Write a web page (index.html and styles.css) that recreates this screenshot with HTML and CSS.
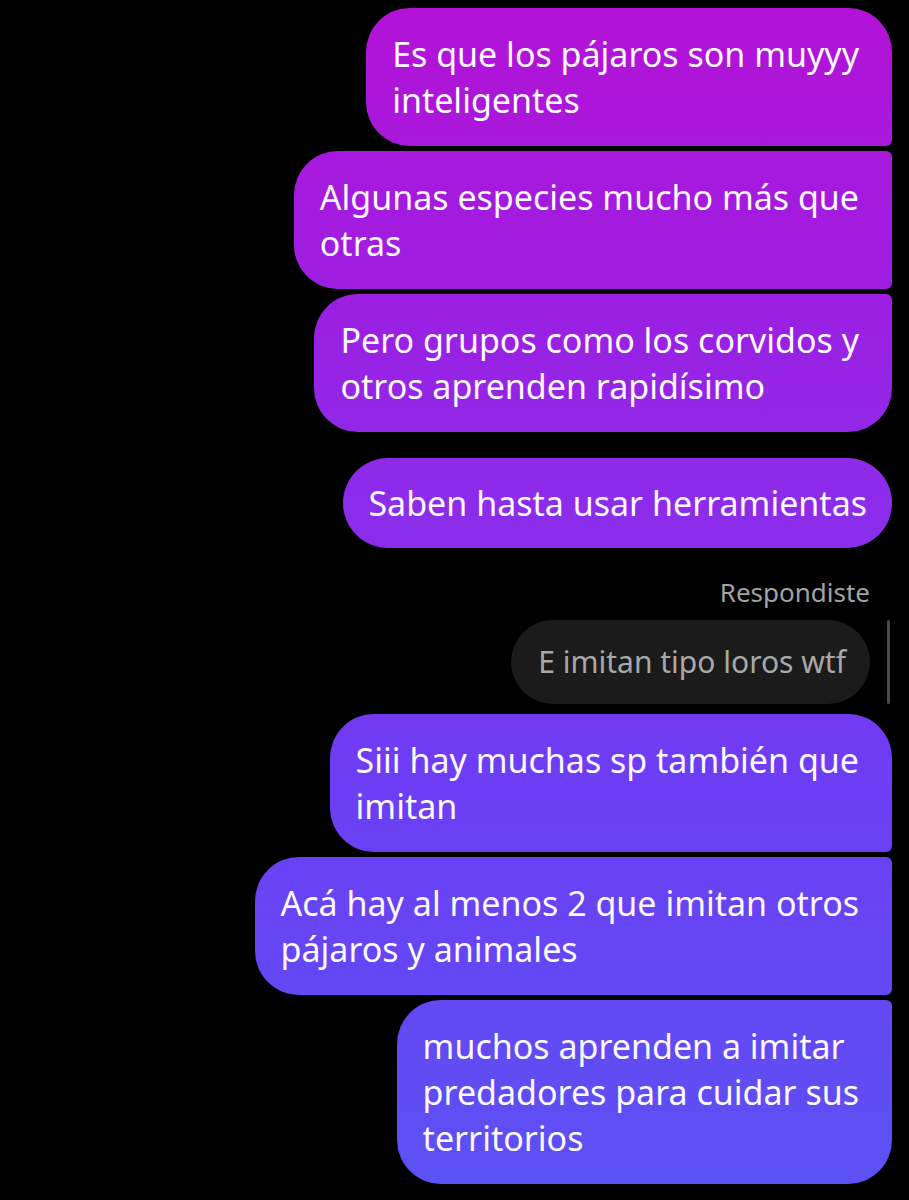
FILE: index.html
```html
<!DOCTYPE html>
<html lang="es">
<head>
    <meta charset="UTF-8">
    <meta name="viewport" content="width=device-width, initial-scale=1.0">
    <title>Chat</title>
    <link rel="stylesheet" href="styles.css">
</head>
<body>
    <div class="chat">
        <div class="group">
            <div class="bubble first">Es que los pájaros son muyyy<br>inteligentes</div>
            <div class="bubble">Algunas especies mucho más que<br>otras</div>
            <div class="bubble last">Pero grupos como los corvidos y<br>otros aprenden rapidísimo</div>
        </div>
        <div class="group">
            <div class="bubble single">Saben hasta usar herramientas</div>
        </div>
        <div class="group reply">
            <div class="reply-label">Respondiste</div>
            <div class="reply-row">
                <div class="quoted">E imitan tipo loros wtf</div>
                <div class="reply-bar"></div>
            </div>
        </div>
        <div class="group tight">
            <div class="bubble first">Siii hay muchas sp también que<br>imitan</div>
            <div class="bubble">Acá hay al menos 2 que imitan otros<br>pájaros y animales</div>
            <div class="bubble last">muchos aprenden a imitar<br>predadores para cuidar sus<br>territorios</div>
        </div>
    </div>
</body>
</html>
```

FILE: styles.css
```css
body {
    margin: 0;
    background-color: #000;
    font-family: "Noto Sans", "Open Sans", sans-serif;
}

.chat {
    display: flex;
    flex-direction: column;
    align-items: flex-end;
    padding: 8px 17px 0 0;
    gap: 26px;
}

.group {
    display: flex;
    flex-direction: column;
    align-items: flex-end;
    gap: 5px;
}

.group.tight {
    margin-top: -16px;
}

.bubble {
    color: #fbf8ff;
    font-size: 34px;
    line-height: 46px;
    padding: 23px 33px 23px 26px;
    border-radius: 44px 6px 6px 44px;
    background: linear-gradient(180deg, #b412d6 0%, #9c1fe2 25%, #8a2eec 45%, #6c3ef5 65%, #5b52f3 100%);
    background-attachment: fixed;
}

.bubble.first {
    border-top-right-radius: 44px;
}

.bubble.last {
    border-bottom-right-radius: 44px;
}

.bubble.single {
    border-radius: 45px;
    padding: 22px 25px;
}

.reply {
    gap: 10px;
}

.reply-label {
    color: #a3a3a3;
    font-size: 26px;
    line-height: 36px;
    padding-right: 22px;
}

.reply-row {
    display: flex;
    align-items: stretch;
    gap: 17px;
}

.quoted {
    background-color: #1b1b1b;
    color: #a8a8a8;
    font-size: 30px;
    line-height: 40px;
    padding: 22px 24px 22px 27px;
    border-radius: 42px;
}

.reply-bar {
    width: 3px;
    margin-right: 2px;
    border-radius: 2px;
    background-color: #4a4a4a;
}
```
